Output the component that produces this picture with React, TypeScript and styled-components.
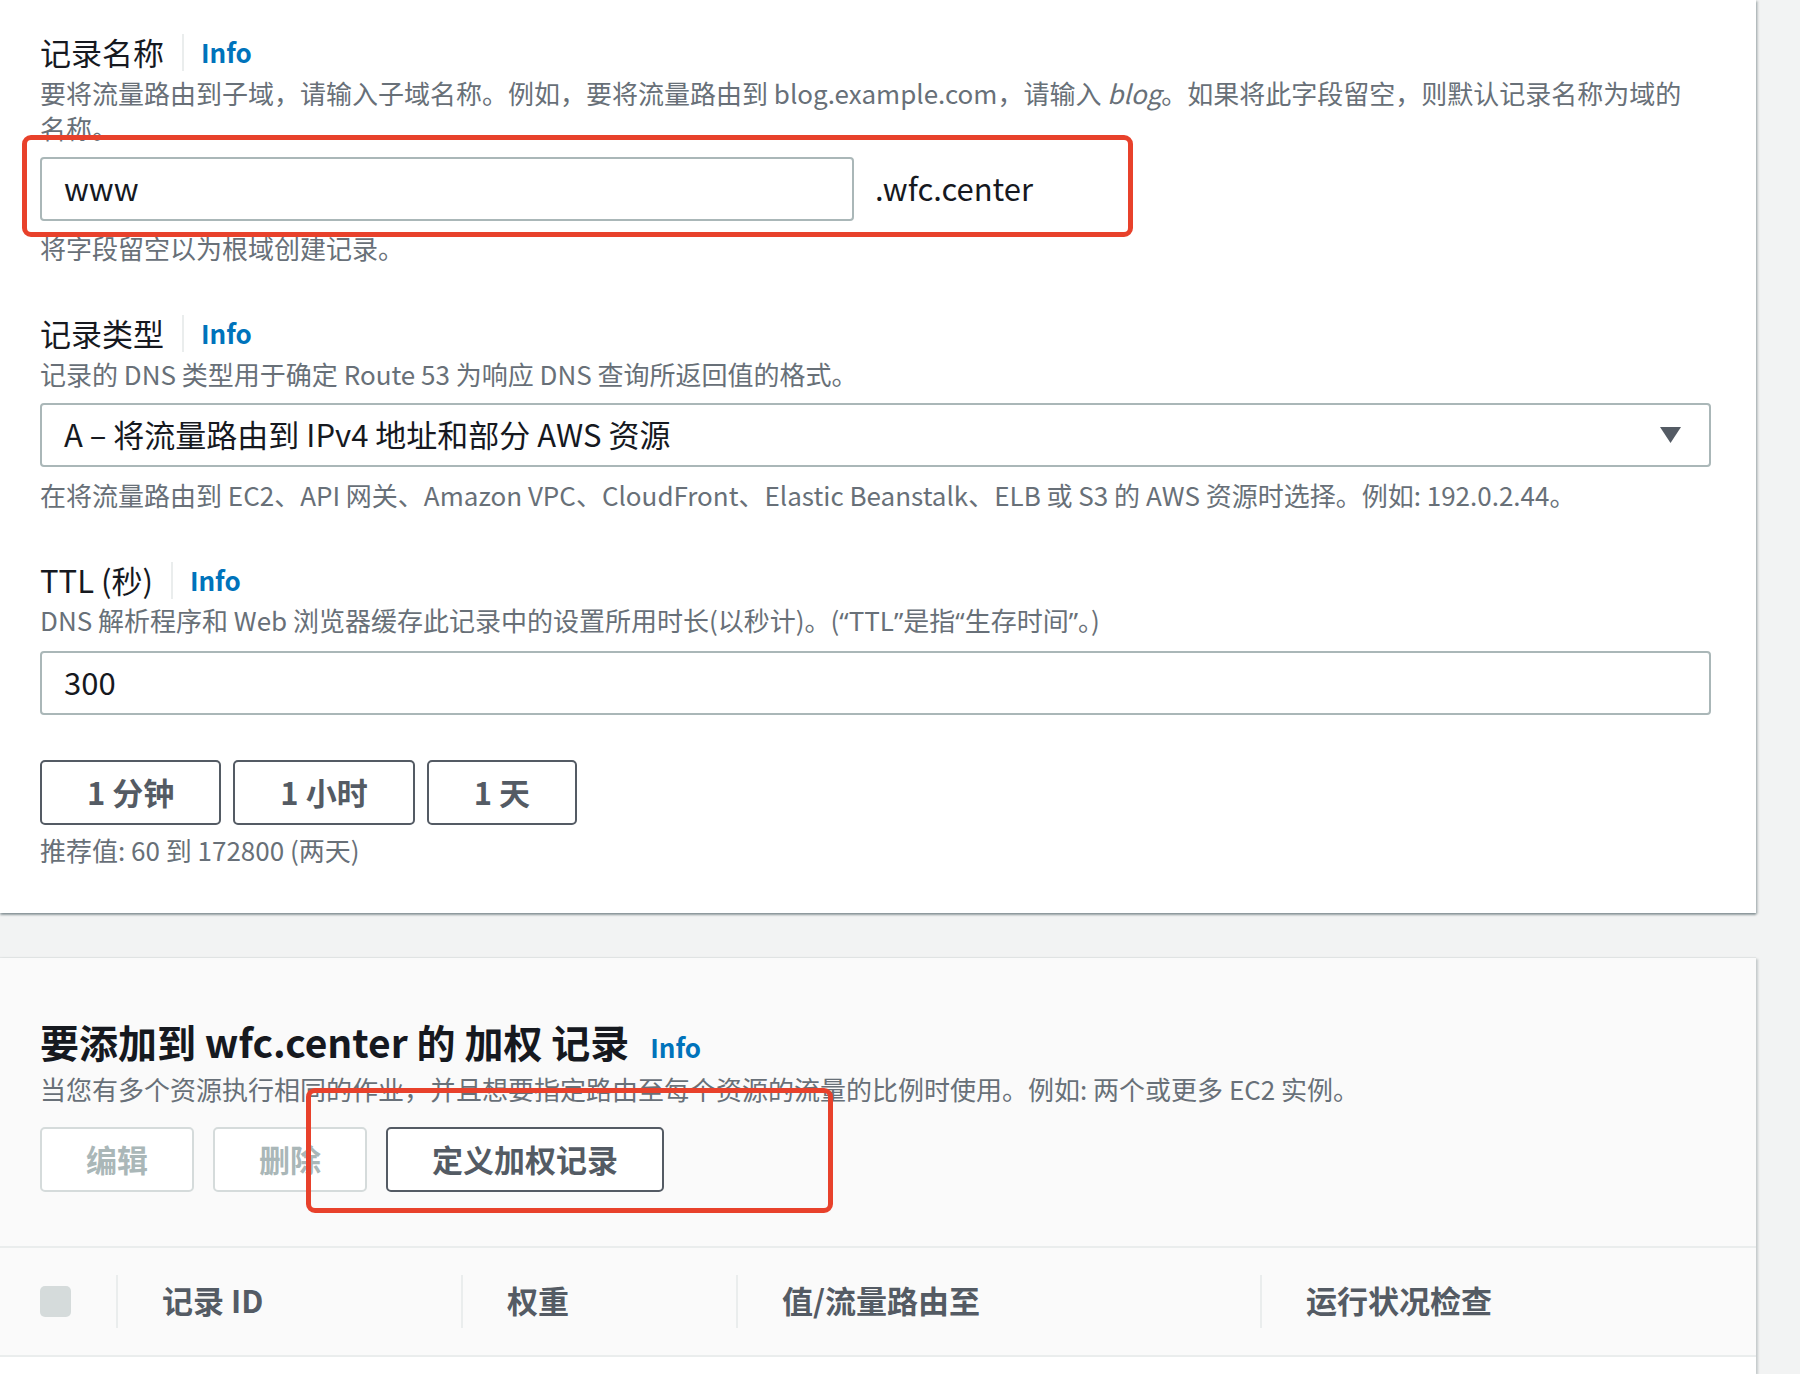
import React from 'react'
import styled, { createGlobalStyle } from 'styled-components'

const GlobalStyle = createGlobalStyle`
  html, body {
    margin: 0;
    padding: 0;
    background: #f2f3f3;
    overflow: hidden;
  }
  body {
    font-family: "Noto Sans CJK SC", "Noto Sans", sans-serif;
  }
  * {
    box-sizing: border-box;
  }
`

const Page = styled.div`
  position: relative;
  width: 1800px;
  height: 1374px;
  overflow: hidden;
  background: #f2f3f3;
  display: flex;
  flex-direction: column;
  gap: 45px;
`

const Panel = styled.section`
  width: 1756px;
  background: #fff;
  box-shadow: 0 2px 2px 0 rgba(0, 28, 36, 0.35), 2px 1px 2px 0 rgba(0, 28, 36, 0.18);
`

const FormPanel = styled(Panel)`
  padding: 32px 45px 46px 40px;
  display: flex;
  flex-direction: column;
  gap: 48px;
`

const Field = styled.div`
  display: flex;
  flex-direction: column;
`

const LabelRow = styled.div`
  display: flex;
  align-items: center;
  height: 40px;
`

const Label = styled.span`
  font-size: 31px;
  line-height: 40px;
  color: #16191f;
`

const Divider = styled.span`
  width: 2px;
  height: 37px;
  background: #eaeded;
  margin: 0 17px 0 18px;
`

const InfoLink = styled.a`
  font-size: 26px;
  line-height: 30px;
  font-weight: 700;
  color: #0073bb;
  text-decoration: none;
  cursor: pointer;
`

const Desc = styled.div<{ $gap?: number; $nowrap?: boolean }>`
  margin-top: ${p => p.$gap ?? 3}px;
  font-size: 26px;
  line-height: 35px;
  color: #687078;
  white-space: ${p => (p.$nowrap ? 'nowrap' : 'normal')};

  em {
    font-style: italic;
  }
`

/* Latin curly quotes: the CJK font draws them full width */
const Quote = styled.span`
  font-family: "Noto Sans", sans-serif;
`

const Hint = styled.div<{ $gap?: number }>`
  margin-top: ${p => p.$gap ?? 9}px;
  font-size: 26px;
  line-height: 35px;
  color: #687078;
`

const InputRow = styled.div`
  margin-top: 12px;
  display: flex;
  align-items: center;
  gap: 21px;
`

const TextInput = styled.input<{ $width?: number }>`
  width: ${p => (p.$width ? `${p.$width}px` : '100%')};
  height: 64px;
  border: 2px solid #aab7b8;
  border-radius: 4px;
  padding: 0 22px 4px;
  font-family: inherit;
  font-size: 31px;
  color: #16191f;
  background: #fff;
  outline: none;
`

const Suffix = styled.span`
  font-size: 31px;
  color: #16191f;
  padding-bottom: 4px;
`

const Select = styled.div`
  margin-top: 12px;
  height: 64px;
  border: 2px solid #aab7b8;
  border-radius: 4px;
  padding: 0 28px 0 22px;
  display: flex;
  align-items: center;
  justify-content: space-between;
  font-size: 31px;
  color: #16191f;
  background: #fff;

  span {
    padding-bottom: 4px;
  }
`

const ButtonRow = styled.div<{ $top: number; $gap: number }>`
  margin-top: ${p => p.$top}px;
  display: flex;
  gap: ${p => p.$gap}px;
`

const Button = styled.button<{ $disabled?: boolean; $pad?: number }>`
  height: 65px;
  padding: 0 ${p => p.$pad ?? 45}px 3px;
  border: 2px solid ${p => (p.$disabled ? '#d5dbdb' : '#545b64')};
  border-radius: 5px;
  background: #fff;
  font-family: inherit;
  font-size: 31px;
  font-weight: 700;
  color: ${p => (p.$disabled ? '#aab7b8' : '#545b64')};
  cursor: ${p => (p.$disabled ? 'default' : 'pointer')};
`

const RecordsPanel = styled(Panel)`
  flex: 1;
  background: #fafafa;
  display: flex;
  flex-direction: column;
  box-shadow: 0 -1px 1px 0 rgba(0, 28, 36, 0.06), 2px 1px 2px 0 rgba(0, 28, 36, 0.18);
`

const RecordsHead = styled.div`
  padding: 58px 45px 54px 40px;
`

const Heading = styled.h2`
  margin: 0;
  height: 50px;
  display: flex;
  align-items: baseline;
  gap: 21px;
  font-size: 39px;
  line-height: 50px;
  font-weight: 700;
  color: #16191f;
`

const TableHeader = styled.div`
  display: grid;
  grid-template-columns: 116px 345px 275px 524px 1fr;
  align-items: center;
  height: 111px;
  border-top: 2px solid #eaeded;
  border-bottom: 2px solid #eaeded;
`

const CheckCell = styled.div`
  padding-left: 40px;
  display: flex;
  align-items: center;
`

const CheckBox = styled.span`
  width: 31px;
  height: 31px;
  border-radius: 5px;
  background: #d5dbdb;
`

const HeaderCell = styled.div`
  height: 53px;
  border-left: 2px solid #eaeded;
  padding: 0 0 4px 44px;
  display: flex;
  align-items: center;
  font-size: 31px;
  font-weight: 700;
  color: #545b64;
`

const TableBody = styled.div`
  flex: 1;
  background: #fff;
`

const Annotation = styled.div<{ $x: number; $y: number; $w: number; $h: number }>`
  position: absolute;
  left: ${p => p.$x}px;
  top: ${p => p.$y}px;
  width: ${p => p.$w}px;
  height: ${p => p.$h}px;
  border: 5px solid #e8412b;
  border-radius: 9px;
  pointer-events: none;
`

const FieldLabel: React.FC<{ text: string }> = ({ text }) => (
  <LabelRow>
    <Label>{text}</Label>
    <Divider />
    <InfoLink>Info</InfoLink>
  </LabelRow>
)

const columns = ['记录 ID', '权重', '值/流量路由至', '运行状况检查']

export default function App() {
  return (
    <Page>
      <GlobalStyle />
      <FormPanel>
        <Field>
          <FieldLabel text="记录名称" />
          <Desc $nowrap>
            要将流量路由到子域，请输入子域名称。例如，要将流量路由到 blog.example.com，请输入 <em>blog</em>。如果将此字段留空，则默认记录名称为域的
            <br />
            名称。
          </Desc>
          <InputRow>
            <TextInput $width={814} readOnly value="www" />
            <Suffix>.wfc.center</Suffix>
          </InputRow>
          <Hint>将字段留空以为根域创建记录。</Hint>
        </Field>

        <Field>
          <FieldLabel text="记录类型" />
          <Desc>记录的 DNS 类型用于确定 Route 53 为响应 DNS 查询所返回值的格式。</Desc>
          <Select>
            <span>A – 将流量路由到 IPv4 地址和部分 AWS 资源</span>
            <svg width="21" height="16" viewBox="0 0 21 16">
              <polygon points="0,0 21,0 10.5,16" fill="#545b64" />
            </svg>
          </Select>
          <Hint $gap={10}>
            在将流量路由到 EC2、API 网关、Amazon VPC、CloudFront、Elastic Beanstalk、ELB 或 S3 的 AWS 资源时选择。例如: 192.0.2.44。
          </Hint>
        </Field>

        <Field>
          <FieldLabel text="TTL (秒)" />
          <Desc $gap={2}>
            DNS 解析程序和 Web 浏览器缓存此记录中的设置所用时长(以秒计)。(<Quote>“</Quote>TTL<Quote>”</Quote>是指
            <Quote>“</Quote>生存时间<Quote>”</Quote>。)
          </Desc>
          <InputRow>
            <TextInput readOnly value="300" />
          </InputRow>
          <ButtonRow $top={45} $gap={12}>
            <Button>1 分钟</Button>
            <Button>1 小时</Button>
            <Button>1 天</Button>
          </ButtonRow>
          <Hint $gap={7}>推荐值: 60 到 172800 (两天)</Hint>
        </Field>
      </FormPanel>

      <RecordsPanel>
        <RecordsHead>
          <Heading>
            <span>要添加到 wfc.center 的 加权 记录</span>
            <InfoLink>Info</InfoLink>
          </Heading>
          <Desc $gap={5}>当您有多个资源执行相同的作业，并且想要指定路由至每个资源的流量的比例时使用。例如: 两个或更多 EC2 实例。</Desc>
          <ButtonRow $top={21} $gap={19}>
            <Button $disabled $pad={44}>编辑</Button>
            <Button $disabled $pad={44}>删除</Button>
            <Button $pad={44}>定义加权记录</Button>
          </ButtonRow>
        </RecordsHead>
        <TableHeader>
          <CheckCell>
            <CheckBox />
          </CheckCell>
          {columns.map(c => (
            <HeaderCell key={c}>{c}</HeaderCell>
          ))}
        </TableHeader>
        <TableBody />
      </RecordsPanel>

      <Annotation $x={22} $y={135} $w={1111} $h={102} />
      <Annotation $x={306} $y={1088} $w={527} $h={125} />
    </Page>
  )
}
